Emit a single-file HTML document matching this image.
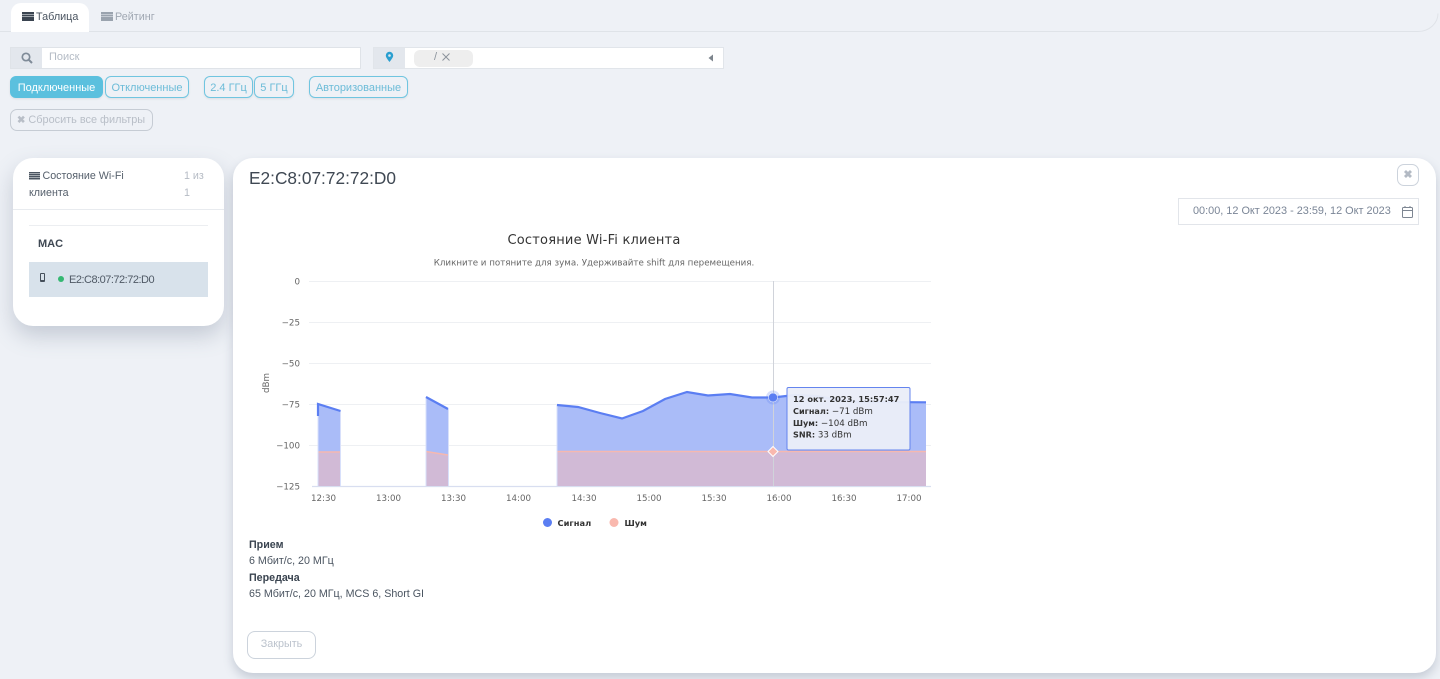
<!DOCTYPE html>
<html lang="ru"><head><meta charset="utf-8"><title>Wi-Fi</title>
<style>
html,body{margin:0;padding:0;width:1440px;height:679px;overflow:hidden;background:#eef1f6;font-family:"Liberation Sans","Noto Sans CJK SC",sans-serif;}
.a{position:absolute;box-sizing:border-box;white-space:nowrap;}
.btn{position:absolute;box-sizing:border-box;height:22px;top:76px;border:1px solid #70c5e0;border-radius:6px;color:#6cbcd8;font-size:11px;line-height:22px;text-align:center;box-shadow:0 1px 2px rgba(0,0,0,.08);}
svg{position:absolute;left:0;top:0;}
svg text{font-family:"DejaVu Sans",sans-serif;}
</style></head><body>

<svg width="1440" height="40" style="z-index:0"><path d="M0 31.500H1418a20 18 0 0 0 20-18" fill="none" stroke="#dfe3e8" stroke-width="1"/></svg>
<div class="a" style="left:11px;top:3px;width:78px;height:29px;background:#fff;border-radius:10px 10px 0 0;"></div>
<div class="a" style="left:22px;top:12px;width:12px;height:9px;background:repeating-linear-gradient(#3a4450 0,#3a4450 2px,#fff 2px,#fff 2.400px);"></div>
<div class="a" style="left:36px;top:10px;font-size:10.800px;line-height:14px;color:#4a5460;">Таблица</div>
<div class="a" style="left:101px;top:12px;width:12px;height:9px;background:repeating-linear-gradient(#9aa3ae 0,#9aa3ae 2px,#eef1f6 2px,#eef1f6 2.400px);"></div>
<div class="a" style="left:115px;top:10px;font-size:10.800px;line-height:14px;color:#a0a8b2;">Рейтинг</div>

<div class="a" style="left:10px;top:47px;width:351px;height:22px;background:#fff;border:1px solid #dfe3e8;"></div>
<div class="a" style="left:11px;top:48px;width:31px;height:20px;background:#e3e7ed;"></div>
<svg width="1440" height="679" style="z-index:2;pointer-events:none">
<circle cx="26" cy="57" r="3.700" fill="none" stroke="#7f8b98" stroke-width="1.700"/><path d="M29 60l3 3" stroke="#7f8b98" stroke-width="2"/>
<path d="M389.500 62c-2.500-3.200-3.700-5-3.700-6.500a3.700 3.700 0 0 1 7.400 0c0 1.500-1.200 3.300-3.700 6.500z" fill="#2a9fd0"/><circle cx="389.500" cy="55.500" r="1.300" fill="#e3e7ed"/>
<path d="M442.500 53.500l7 7m0-7l-7 7" stroke="#8b939c" stroke-width="1"/>
<path d="M713 54.500v7l-4.500-3.500z" fill="#7d858d"/>
</svg>
<div class="a" style="left:49px;top:50px;font-size:11px;line-height:15px;color:#b4bbc5;">Поиск</div>
<div class="a" style="left:373px;top:47px;width:351px;height:22px;background:#fff;border:1px solid #e1e5ea;"></div>
<div class="a" style="left:374px;top:48px;width:31px;height:20px;background:#e3e7ed;"></div>
<div class="a" style="left:414px;top:50px;width:59px;height:17px;background:#eeeeee;border-radius:6px;"></div>
<div class="a" style="left:434px;top:50px;font-size:11px;line-height:15px;color:#8b939c;">/</div>

<div class="btn" style="left:10px;width:93px;background:#5bc0de;border-color:#5bc0de;color:#fff;">Подключенные</div>
<div class="btn" style="left:105px;width:84px;">Отключенные</div>
<div class="btn" style="left:204px;width:49px;">2.4 ГГц</div>
<div class="btn" style="left:254px;width:40px;">5 ГГц</div>
<div class="btn" style="left:309px;width:99px;">Авторизованные</div>
<div class="a" style="left:10px;top:109px;width:143px;height:22px;border:1px solid #c6ccd4;border-radius:7px;color:#b8bec7;font-size:10.900px;line-height:20px;padding-left:6px;"><b style="font-size:10px">✖</b> Сбросить все фильтры</div>

<div class="a" style="left:13px;top:158px;width:211px;height:168px;background:#fff;border-radius:20px;box-shadow:0 10px 22px rgba(90,105,130,.28);"></div>
<div class="a" style="left:29px;top:172px;width:11px;height:8px;background:repeating-linear-gradient(#4a5460 0,#4a5460 1.500px,#fff 1.500px,#fff 2px);"></div>
<div class="a" style="left:29px;top:168px;font-size:10.700px;line-height:16.500px;color:#555f6b;"><span style="margin-left:13.500px">Состояние Wi-Fi</span><br>клиента</div>
<div class="a" style="left:184px;top:168px;font-size:10.700px;line-height:16.500px;color:#b5bbc4;">1 из<br>1</div>
<div class="a" style="left:13px;top:209px;width:211px;height:1px;background:#e8ebef;"></div>
<div class="a" style="left:29px;top:225px;width:179px;height:1px;background:#eceef1;"></div>
<div class="a" style="left:38px;top:236px;font-size:11px;line-height:16px;font-weight:bold;color:#3f4853;">MAC</div>
<div class="a" style="left:29px;top:262px;width:179px;height:35px;background:#d8e2eb;"></div>
<div class="a" style="left:40px;top:273px;width:5px;height:9px;border:1px solid #46505b;border-bottom-width:2px;border-radius:1px;"></div>
<div class="a" style="left:58px;top:276px;width:6px;height:6px;background:#35b872;border-radius:50%;"></div>
<div class="a" style="left:69px;top:273px;font-size:11px;letter-spacing:-.5px;line-height:15px;color:#4f5965;">E2:C8:07:72:72:D0</div>

<div class="a" style="left:233px;top:158px;width:1203px;height:515px;background:#fff;border-radius:20px;box-shadow:0 5px 10px rgba(90,105,130,.28);"></div>
<div class="a" style="left:249px;top:167px;font-size:17.300px;line-height:23px;color:#3f4853;">E2:C8:07:72:72:D0</div>
<div class="a" style="left:1397px;top:164px;width:22px;height:22px;border:1px solid #ccd3dc;border-radius:7px;color:#b3bac4;font-size:11px;line-height:20px;text-align:center;font-weight:bold;">✖</div>
<div class="a" style="left:1178px;top:198px;width:241px;height:27px;border:1px solid #e2e5ea;"></div>
<div class="a" style="left:1193px;top:204px;font-size:10.900px;line-height:15px;color:#7a8596;">00:00, 12 Окт 2023 - 23:59, 12 Окт 2023</div>

<svg width="1440" height="679" viewBox="0 0 1440 679" style="z-index:3">
<g fill="none" stroke="#7d8692"><rect x="1402.500" y="207.500" width="10" height="10" rx="1"/><path d="M1402.500 210.500h10M1405 206v2M1410 206v2"/></g>
<text x="594" y="244" text-anchor="middle" font-size="13" fill="#333" style="letter-spacing:.2px">Состояние Wi‑Fi клиента</text>
<text x="594" y="265.500" text-anchor="middle" font-size="8.700" fill="#666">Кликните и потяните для зума. Удерживайте shift для перемещения.</text>
<g stroke="#eef0f3" stroke-width="1"><path d="M309 281.500H931M309 322.500H931M309 363.500H931M309 404.500H931M309 445.500H931"/></g>
<path d="M312 486.500H931" stroke="#d8def0" stroke-width="1.200"/>
<g font-size="8.700" fill="#666" text-anchor="end"><text x="300" y="284.500">0</text><text x="300" y="325.500">−25</text><text x="300" y="366.500">−50</text><text x="300" y="407.500">−75</text><text x="300" y="448.500">−100</text><text x="300" y="489.500">−125</text></g>
<text transform="translate(269 383) rotate(-90)" text-anchor="middle" font-size="8.700" fill="#666">dBm</text>
<g font-size="8.700" fill="#666" text-anchor="middle"><text x="323.500" y="501">12:30</text><text x="388.500" y="501">13:00</text><text x="453.500" y="501">13:30</text><text x="518.500" y="501">14:00</text><text x="584" y="501">14:30</text><text x="649" y="501">15:00</text><text x="714" y="501">15:30</text><text x="779" y="501">16:00</text><text x="844" y="501">16:30</text><text x="909" y="501">17:00</text></g>
<g fill="#aabcf8"><path d="M318 486V404L340 411V486Z"/><path d="M426 486V397L448 409V486Z"/><path d="M557 486V405L578 407L600 413L622 418.500L643 411L665 399L687 392L708 395.500L730 394L752 397.500L773 397.500L795 395L817 396L839 400L860 402L882 402L926 402.300V486Z"/></g>
<g fill="#d1bad6"><path d="M318 486V452H340V486Z"/><path d="M426 486V451.500L448 455V486Z"/><path d="M557 486V451.500H926V486Z"/></g>
<g fill="none" stroke="#f6b8b0" stroke-width="1.500"><path d="M318 452H340"/><path d="M426 451.500L448 455"/><path d="M557 451.500H926"/></g>
<g fill="none" stroke="#d8e0fb" stroke-width="1"><path d="M340.500 411V486M318 416V486M426 397V486M448.500 409V486M557 405V486"/></g>
<g fill="none" stroke="#5b7ef2" stroke-width="2.200"><path d="M318 416V404L340.500 411"/><path d="M426 397L448 409"/><path d="M557 405L578 407L600 413L622 418.500L643 411L665 399L687 392L708 395.500L730 394L752 397.500L773 397.500L795 395L817 396L839 400L860 402L882 402L926 402.300"/></g>
<path d="M773.500 281V486" stroke="#d0d3da" stroke-width="1"/>
<circle cx="773" cy="397.500" r="7" fill="#5b7ef2" fill-opacity=".25"/><circle cx="773" cy="397.500" r="4.500" fill="#5b7ef2" stroke="#fff" stroke-width=".5"/>
<path d="M773 446.500l5 5-5 5-5-5z" fill="#f9b8ae" stroke="#fff" stroke-width="1"/>
<rect x="787" y="387.500" width="123" height="62.500" rx="1.500" fill="#eaedf8" fill-opacity=".96" stroke="#6484ee" stroke-width="1"/>
<g font-size="8.700" fill="#333"><text x="793" y="402" font-weight="bold" font-size="8.250">12 окт. 2023, 15:57:47</text><text x="793" y="414"><tspan font-weight="bold" font-size="8.100">Сигнал:</tspan> −71 dBm</text><text x="793" y="426"><tspan font-weight="bold" font-size="8.100">Шум:</tspan> −104 dBm</text><text x="793" y="437.500"><tspan font-weight="bold" font-size="8.100">SNR:</tspan> 33 dBm</text></g>
<circle cx="547.500" cy="522.500" r="4.500" fill="#5b7ef2"/><text x="557.500" y="526" font-size="8.300" font-weight="bold" fill="#333">Сигнал</text>
<circle cx="614" cy="522.500" r="4.500" fill="#f9b8ae"/><text x="624.500" y="526" font-size="8.300" font-weight="bold" fill="#333">Шум</text>
</svg>

<div class="a" style="left:249px;top:536.500px;font-size:10.700px;line-height:16.500px;color:#4a5460;"><b style="color:#3a4450">Прием</b><br>6 Мбит/с, 20 МГц<br><b style="color:#3a4450">Передача</b><br>65 Мбит/с, 20 МГц, MCS 6, Short GI</div>
<div class="a" style="left:247px;top:631px;width:69px;height:28px;border:1px solid #ccd3dc;border-radius:8px;color:#bcc3cd;font-size:10.800px;line-height:25px;text-align:center;">Закрыть</div>
</body></html>
